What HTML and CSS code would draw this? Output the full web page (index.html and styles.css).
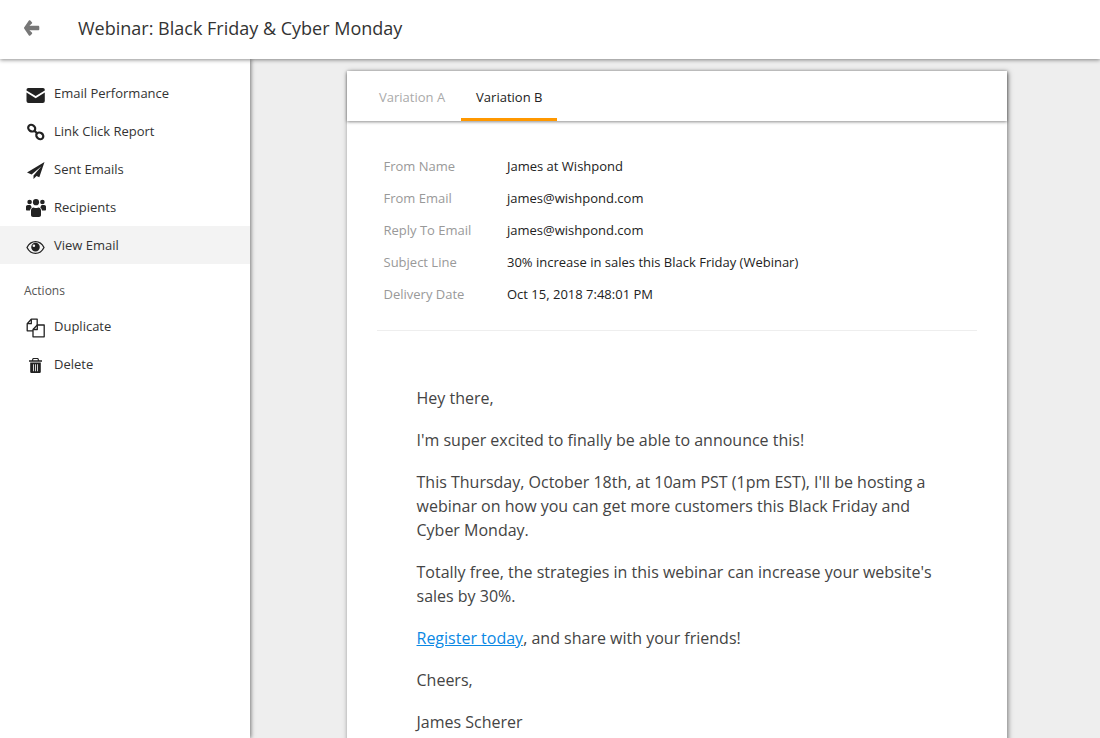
FILE: index.html
```html
<!DOCTYPE html>
<html lang="en">
<head>
<meta charset="utf-8">
<title>Webinar: Black Friday &amp; Cyber Monday</title>
<link rel="stylesheet" href="styles.css">
</head>
<body>
<header class="topbar">
  <a class="back" aria-label="Back">
    <svg width="16" height="16" viewBox="0 0 16 16"><path fill="#777" d="M6.300.6 7.900 2.200c.4.400.4 1 0 1.400L5.400 5.800H14.200c.6 0 1.100.5 1.100 1.100v2.300c0 .6-.5 1.100-1.100 1.100H5.400l2.500 2.300c.4.400.4 1 0 1.400l-1.600 1.500c-.4.400-1 .4-1.400 0L.3 8.700c-.4-.4-.4-1 0-1.400L4.900.6c.4-.4 1-.4 1.400 0z"/></svg>
  </a>
  <h1 class="title">Webinar: Black Friday &amp; Cyber Monday</h1>
</header>
<div class="main">
  <nav class="sidebar">
    <ul class="menu">
      <li class="item"><svg class="icon" viewBox="0 0 20 24"><path d="M2.300 7h14.700a1.800 1.800 0 0 1 1.800 1.800v.6L9.700 15 .5 9.400v-.6A1.800 1.800 0 0 1 2.300 7z"/><path d="M.5 11.500l9.200 5.700 9.100-5.700V20a2 2 0 0 1-2 2H2.500a2 2 0 0 1-2-2z"/></svg><span>Email Performance</span></li>
      <li class="item"><svg class="icon" viewBox="0 0 20 24"><g class="line thick"><ellipse cx="5.700" cy="9.200" rx="3.700" ry="3.100" transform="rotate(35 5.700 9.200)"/><ellipse cx="13.800" cy="16.800" rx="3.700" ry="3.100" transform="rotate(35 13.800 16.800)"/><path d="M8 11.200 11.500 14.800"/></g></svg><span>Link Click Report</span></li>
      <li class="item"><svg class="icon" viewBox="0 0 20 24"><path d="M18.500 5 1 15.500l4.600 2L15.500 9.200 7.500 18.500V22l3-3 2.800 1.200z"/></svg><span>Sent Emails</span></li>
      <li class="item"><svg class="icon" viewBox="0 0 20 24"><circle cx="3.600" cy="7" r="2.300"/><circle cx="16.400" cy="7" r="2.300"/><circle cx="10" cy="7.200" r="3.100"/><path d="M0 11.800c0-1 .8-1.800 1.800-1.800h2.700c.3.900.8 1.600 1.400 2.200-1 .7-1.700 1.900-1.900 3.300H1c-.6 0-1-.4-1-1zM20 11.800c0-1-.8-1.800-1.800-1.800h-2.700c-.3.900-.8 1.600-1.400 2.200 1 .7 1.700 1.900 1.900 3.300h3c.6 0 1-.4 1-1z"/><path d="M5 15.500c0-1.800 1.200-3 2.800-3 .6.400 1.300.6 2.200.6s1.600-.2 2.200-.6c1.600 0 2.800 1.200 2.800 3V20c0 1.200-.8 2-2 2H7c-1.200 0-2-.8-2-2z"/></svg><span>Recipients</span></li>
      <li class="item active"><svg class="icon" viewBox="0 0 20 24"><path class="line" d="M1 14.500C3 10.500 6 8.600 9.500 8.600S16 10.500 18 14.500C16 18.500 13 20.400 9.500 20.400S3 18.500 1 14.500z"/><path fill-rule="evenodd" d="M9.500 9.800a4.300 4.300 0 1 1 0 8.600 4.300 4.300 0 0 1 0-8.600zM7.900 11.500a1.300 1.300 0 1 0 0 2.600 1.300 1.300 0 0 0 0-2.600z"/></svg><span>View Email</span></li>
    </ul>
    <div class="group-label">Actions</div>
    <ul class="menu">
      <li class="item"><svg class="icon" viewBox="0 0 20 24"><g class="line"><path d="M7 16.800H1.200V9.700L5.300 5.200h5.900v5.800"/><path d="M5.300 5.200v4.500H1.200"/><path d="M11.300 11h6.900v11.800H7V15.500z"/><path d="M11.300 11v4.500H7"/></g></svg><span>Duplicate</span></li>
      <li class="item"><svg class="icon" viewBox="0 0 20 24"><path fill-rule="evenodd" d="M6.800 6h5.400l1 2.200H16v1.600H3V8.200h2.800zM7.500 7l-.4 1.200h4.800L11.500 7zM4.200 10.400h10.600V19.700c0 .8-.6 1.300-1.300 1.300H5.500c-.7 0-1.300-.5-1.300-1.300zM7 12.300v7h.8v-7zm2.100 0v7h.8v-7zm2.100 0v7h.8v-7z"/></svg><span>Delete</span></li>
    </ul>
  </nav>
  <main class="content">
    <section class="card">
      <div class="tabs">
        <div class="tab">Variation A</div>
        <div class="tab selected">Variation B</div>
      </div>
      <dl class="meta">
        <div class="meta-row"><dt>From Name</dt><dd>James at Wishpond</dd></div>
        <div class="meta-row"><dt>From Email</dt><dd>james@wishpond.com</dd></div>
        <div class="meta-row"><dt>Reply To Email</dt><dd>james@wishpond.com</dd></div>
        <div class="meta-row"><dt>Subject Line</dt><dd>30% increase in sales this Black Friday (Webinar)</dd></div>
        <div class="meta-row"><dt>Delivery Date</dt><dd>Oct 15, 2018 7:48:01 PM</dd></div>
      </dl>
      <article class="email">
        <p>Hey there,</p>
        <p>I'm super excited to finally be able to announce this!</p>
        <p>This Thursday, October 18th, at 10am PST (1pm EST), I'll be hosting a webinar on how you can get more customers this Black Friday and Cyber Monday.</p>
        <p>Totally free, the strategies in this webinar can increase your website's sales by 30%.</p>
        <p><a class="link">Register today</a>, and share with your friends!</p>
        <p>Cheers,</p>
        <p>James Scherer</p>
      </article>
    </section>
  </main>
</div>
</body>
</html>
```
FILE: styles.css
```css
* { box-sizing: border-box; }
html, body { height: 100%; margin: 0; }
body {
  display: flex;
  flex-direction: column;
  height: 738px;
  overflow: hidden;
  font-family: "Open Sans", sans-serif;
  color: #333;
  background: #eee;
}
.topbar {
  position: relative;
  z-index: 2;
  flex: none;
  display: flex;
  align-items: center;
  height: 59px;
  padding: 0 0 4px 24px;
  background: #fff;
  box-shadow: 0 1px 4px rgba(0, 0, 0, .45);
}
.back { display: flex; width: 54px; }
.title { margin: 0; font-size: 18px; font-weight: 400; color: #333; }
.main { flex: 1; display: flex; min-height: 0; }
.sidebar {
  position: relative;
  z-index: 1;
  flex: none;
  width: 250px;
  padding-top: 15px;
  background: #fff;
  box-shadow: 1px 0 4px rgba(0, 0, 0, .5);
}
.menu { margin: 0; padding: 0; list-style: none; }
.item {
  display: flex;
  align-items: center;
  height: 38px;
  padding-left: 26px;
  font-size: 13px;
  color: #333;
}
.item.active { background: #f3f3f3; }
.icon { flex: none; width: 20px; height: 24px; margin-right: 8px; fill: #222; }
.line { fill: none; stroke: #222; stroke-width: 1.300; stroke-linejoin: round; }
.line.thick { stroke-width: 2.200; }
.group-label { padding: 19px 0 8px 24px; font-size: 12px; line-height: 16px; color: #555; }
.content { flex: 1; display: flex; justify-content: center; padding: 12px 0 0 4px; min-width: 0; }
.card { width: 660px; height: 900px; background: #fff; box-shadow: 1px 1px 5px rgba(0, 0, 0, .5); }
.tabs { display: flex; height: 50px; padding-left: 14px; box-shadow: 0 1px 3px rgba(0, 0, 0, .45); }
.tab {
  padding: 0 18px;
  font-size: 13px;
  line-height: 52px;
  color: #aaa;
}
.tab.selected { padding: 0 15px; color: #222; border-bottom: 3px solid #ff9800; margin-left: -2px; }
.meta {
  margin: 29px 30px 0;
  padding: 0 6.500px 20px;
  border-bottom: 1px solid #eee;
}
.meta-row { display: flex; height: 32px; align-items: center; font-size: 13px; }
.meta-row dt { width: 123.500px; color: #999; }
.meta-row dd { margin: 0; color: #222; }
.email { padding: 55px 70.500px 0 69.500px; font-size: 16px; line-height: 24px; color: #444; }
.email p { margin: 0 0 18px; }
.link { color: #0a88e4; text-decoration: underline; }
```
